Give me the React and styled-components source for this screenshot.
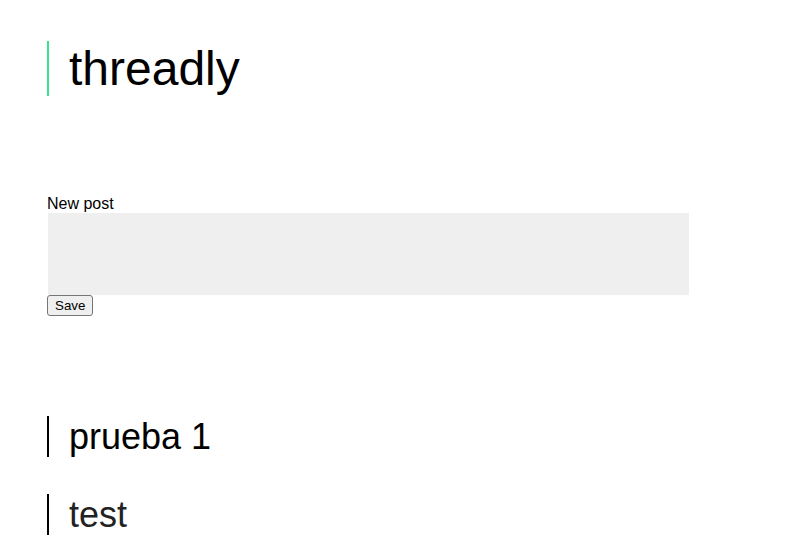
import React from "react";
import styled, { createGlobalStyle } from "styled-components";

const Global = createGlobalStyle`
  html, body { margin: 0; padding: 0; background: #fff; }
  body { font-family: "Liberation Sans", Arial, sans-serif; color: #000; }
`;

const Page = styled.main`
  padding: 41px 47px;
`;

const Title = styled.h1`
  margin: 0;
  font-size: 48px;
  line-height: 55px;
  font-weight: 400;
  border-left: 2px solid #35e48f;
  padding-left: 20px;
`;

const Form = styled.form`
  margin-top: 99px;
  display: flex;
  flex-direction: column;
  align-items: flex-start;
`;

const Label = styled.label`
  font-size: 16px;
  line-height: 18px;
`;

const TextArea = styled.textarea`
  box-sizing: border-box;
  width: 641px;
  height: 82px;
  margin: 0 0 0 1px;
  border: none;
  background: #efefef;
  resize: none;
  padding: 2px;
  font-family: inherit;
`;

const Button = styled.button`
  font-family: "Liberation Sans", Arial, sans-serif;
  font-size: 13.33px;
  line-height: 15px;
  padding: 2px 7px;
  border: 1px solid #767676;
  border-radius: 3px;
  background: #efefef;
  color: #000;
  margin: 0;
`;

const Posts = styled.section`
  margin-top: 100px;
  display: flex;
  flex-direction: column;
  gap: 37px;
`;

const PostTitle = styled.h2`
  margin: 0;
  font-size: 36px;
  line-height: 41px;
  font-weight: 400;
  color: ${(p) => (p.$muted ? "#222" : "#000")};
  border-left: 2px solid #000;
  padding-left: 20px;
`;

export default function App() {
  const posts = [
    { title: "prueba 1", muted: false },
    { title: "test", muted: true },
  ];
  return (
    <>
      <Global />
      <Page>
        <Title>threadly</Title>
        <Form onSubmit={(e) => e.preventDefault()}>
          <Label htmlFor="post">New post</Label>
          <TextArea id="post" />
          <Button type="submit">Save</Button>
        </Form>
        <Posts>
          {posts.map((p) => (
            <PostTitle key={p.title} $muted={p.muted}>
              {p.title}
            </PostTitle>
          ))}
        </Posts>
      </Page>
    </>
  );
}
